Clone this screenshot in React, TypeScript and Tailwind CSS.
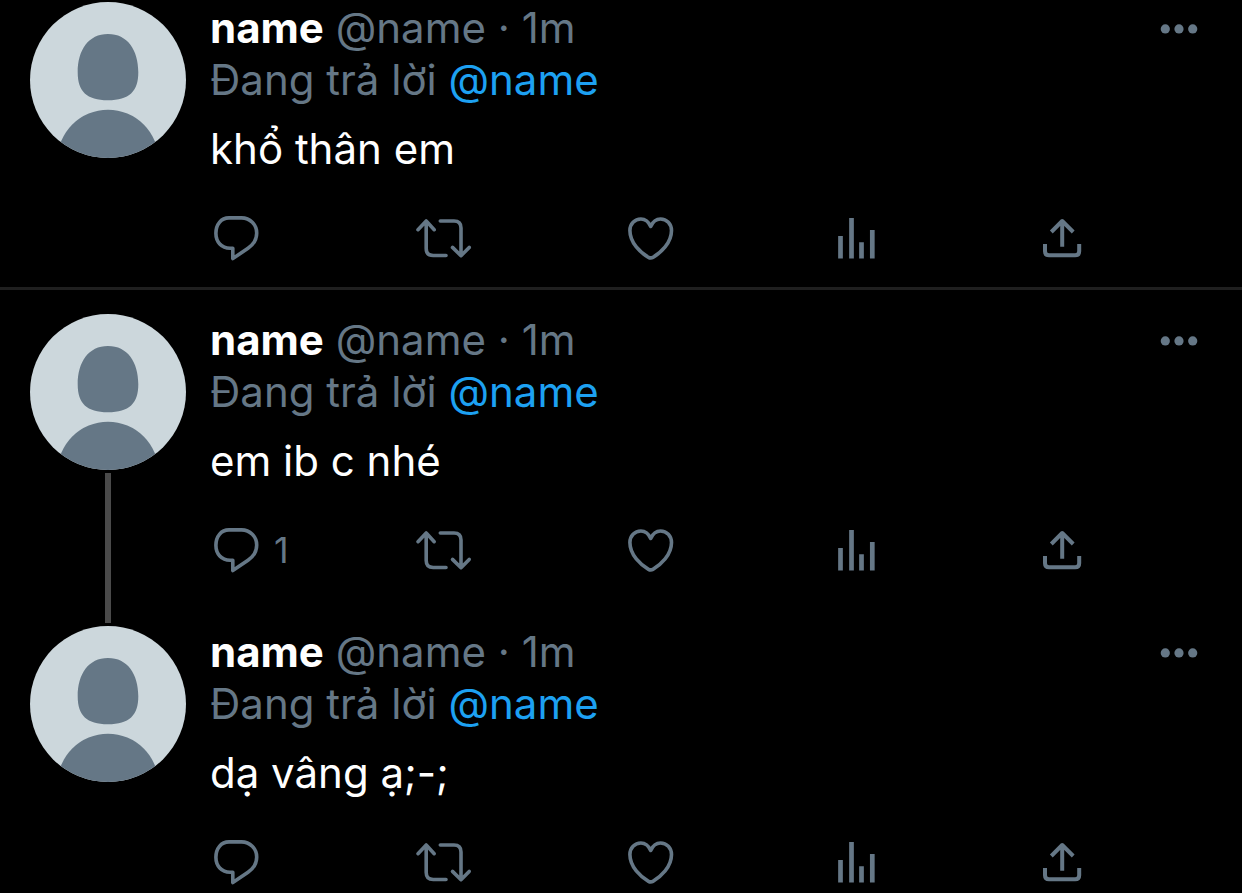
import type { ReactNode } from "react";
import clsx from "clsx";

type Tweet = {
  id: number;
  text: string;
  replies?: number;
  thread?: boolean;
  divider?: boolean;
};

const tweets: Tweet[] = [
  { id: 1, text: "khổ thân em", divider: true },
  { id: 2, text: "em ib c nhé", replies: 1, thread: true },
  { id: 3, text: "dạ vâng ạ;-;" },
];

function Avatar() {
  return (
    <svg viewBox="0 0 156 156" className="size-39 shrink-0 rounded-full bg-[#ccd7dc]" aria-hidden="true">
      <path
        d="M78 31.9c19.500 0 30.300 16 30.300 38.300 0 19-9 28-30.300 28s-30.300-9-30.300-28c0-22.300 10.800-38.300 30.300-38.300z"
        fill="#657786"
      />
      <circle cx="78" cy="158.2" r="50.5" fill="#657786" />
    </svg>
  );
}

function Icon({ children, strokeWidth = 3.6 }: { children: ReactNode; strokeWidth?: number }) {
  return (
    <svg
      viewBox="-1 0 52 48"
      className="h-12 w-13 shrink-0 overflow-visible"
      fill="none"
      stroke="currentColor"
      strokeWidth={strokeWidth}
      strokeLinejoin="round"
      aria-hidden="true"
    >
      {children}
    </svg>
  );
}

function ReplyIcon() {
  return (
    <Icon>
      <path d="M18 3.9H30.5C39 3.9 45.7 10.7 45.7 19C45.7 25.5 42.5 30.500 37 34.3L21.8 44.6V34.3H19C10.5 34.3 4.9 28 4.9 19.3C4.9 10.5 10 3.9 18 3.9Z" />
    </Icon>
  );
}

function RetweetIcon() {
  return (
    <Icon>
      <g strokeLinecap="round">
        <path d="M1 15.7L9.2 7L17.2 15.7M9.2 7.5V34.5Q9.2 41.5 16.2 41.5H29" />
        <path d="M23.3 7H37Q44 7 44 14V41M35.500 33.4L44 41.7L52.2 33.4" />
      </g>
    </Icon>
  );
}

function HeartIcon() {
  return (
    <Icon>
      <path d="M26.7 12.5C24.7 8 21.2 5 16.9 5C10.7 5 5.9 9.8 5.9 16.5C5.9 29 16.7 39 24.5 43.3Q26.7 44.500 28.900 43.3C36.700 39 47.500 29 47.500 16.500C47.500 9.800 42.700 5 36.500 5C32.200 5 28.700 8 26.700 12.500Z" />
    </Icon>
  );
}

function StatsIcon() {
  return (
    <Icon strokeWidth={4.7}>
      <path d="M10.5 22V44.400M21.5 4V44.400M31.5 28.300V44.400M42.3 16V44.400" />
    </Icon>
  );
}

function ShareIcon() {
  return (
    <Icon strokeWidth={4}>
      <path d="M14.3 18L25.2 7L36.2 18M25.2 7V32.7M8 30V37.3Q8 41.3 12 41.3H38.2Q42.2 41.3 42.2 37.3V30" />
    </Icon>
  );
}

function Action({ label, count, children }: { label: string; count?: number; children: ReactNode }) {
  return (
    <button type="button" aria-label={label} className="flex items-center gap-3 text-4xl/12">
      {children}
      {count !== undefined && <span>{count}</span>}
    </button>
  );
}

function TweetRow({ tweet, first, last }: { tweet: Tweet; first: boolean; last: boolean }) {
  return (
    <article
      className={clsx(
        "flex gap-6 pl-[30px]",
        first && "pt-0.5",
        tweet.thread && "pt-6",
        tweet.divider && "border-b-3 border-[#1f1f1f]"
      )}
    >
      <div className="flex flex-col items-center">
        <Avatar />
        {tweet.thread && <div className="my-[3px] w-1.5 flex-1 bg-[#4a4a4a]" />}
      </div>

      <div
        className={clsx(
          "min-w-0 flex-1 text-[42px]/[52px]",
          tweet.thread && "pb-[52px]",
          tweet.divider && "pb-[25px]",
          last && "pb-2"
        )}
      >
        <header className="flex items-center justify-between pr-11">
          <p className="text-[#657786]">
            <span className="font-bold text-white">name</span> @name · 1m
          </p>
          <button type="button" aria-label="Thêm" className="text-[#657786]">
            <svg viewBox="0 0 38 10" className="h-2.5 w-[38px] overflow-visible" fill="currentColor" aria-hidden="true">
              <circle cx="5.3" cy="5.9" r="4.6" />
              <circle cx="19" cy="5.9" r="4.6" />
              <circle cx="32.7" cy="5.9" r="4.6" />
            </svg>
          </button>
        </header>

        <p className="text-[#657786]">
          Đang trả lời{" "}
          <a href="#name" className="text-[#1da1f2]">
            @name
          </a>
        </p>

        <p className="mt-[17px] text-white">{tweet.text}</p>

        <div className="mt-[39px] grid grid-cols-5 text-[#657786]">
          <Action label="Trả lời" count={tweet.replies}>
            <ReplyIcon />
          </Action>
          <Action label="Tweet lại">
            <RetweetIcon />
          </Action>
          <Action label="Thích">
            <HeartIcon />
          </Action>
          <Action label="Thống kê">
            <StatsIcon />
          </Action>
          <Action label="Chia sẻ">
            <ShareIcon />
          </Action>
        </div>
      </div>
    </article>
  );
}

export default function App() {
  return (
    <main className="min-h-screen bg-black font-[Inter,'Noto_Sans',sans-serif]">
      {tweets.map((tweet, i) => (
        <TweetRow key={tweet.id} tweet={tweet} first={i === 0} last={i === tweets.length - 1} />
      ))}
    </main>
  );
}
